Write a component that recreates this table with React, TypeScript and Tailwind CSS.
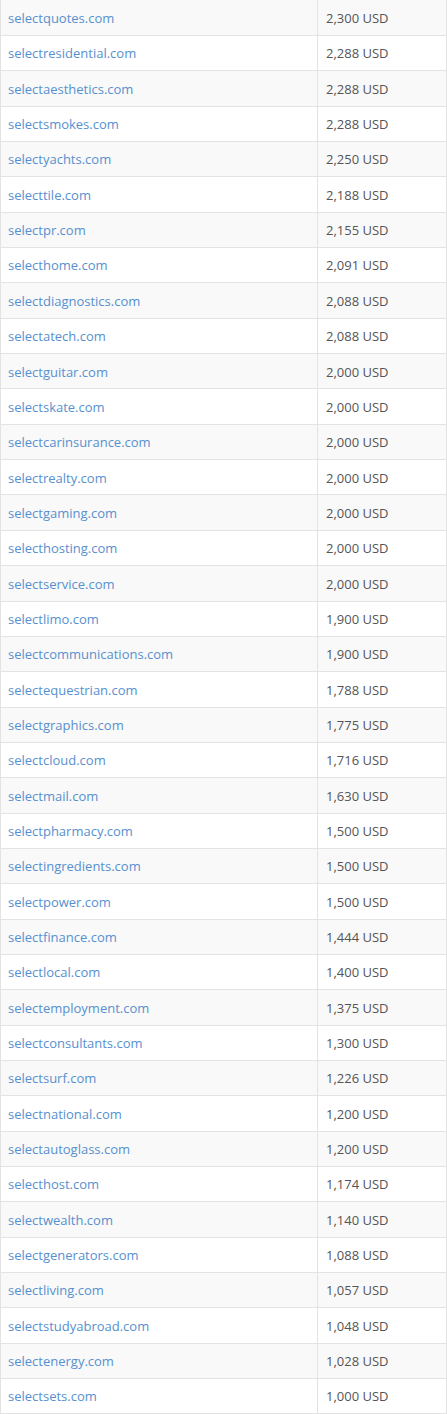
import React from 'react';

const domains: [string, string][] = [
  ['selectquotes.com', '2,300 USD'],
  ['selectresidential.com', '2,288 USD'],
  ['selectaesthetics.com', '2,288 USD'],
  ['selectsmokes.com', '2,288 USD'],
  ['selectyachts.com', '2,250 USD'],
  ['selecttile.com', '2,188 USD'],
  ['selectpr.com', '2,155 USD'],
  ['selecthome.com', '2,091 USD'],
  ['selectdiagnostics.com', '2,088 USD'],
  ['selectatech.com', '2,088 USD'],
  ['selectguitar.com', '2,000 USD'],
  ['selectskate.com', '2,000 USD'],
  ['selectcarinsurance.com', '2,000 USD'],
  ['selectrealty.com', '2,000 USD'],
  ['selectgaming.com', '2,000 USD'],
  ['selecthosting.com', '2,000 USD'],
  ['selectservice.com', '2,000 USD'],
  ['selectlimo.com', '1,900 USD'],
  ['selectcommunications.com', '1,900 USD'],
  ['selectequestrian.com', '1,788 USD'],
  ['selectgraphics.com', '1,775 USD'],
  ['selectcloud.com', '1,716 USD'],
  ['selectmail.com', '1,630 USD'],
  ['selectpharmacy.com', '1,500 USD'],
  ['selectingredients.com', '1,500 USD'],
  ['selectpower.com', '1,500 USD'],
  ['selectfinance.com', '1,444 USD'],
  ['selectlocal.com', '1,400 USD'],
  ['selectemployment.com', '1,375 USD'],
  ['selectconsultants.com', '1,300 USD'],
  ['selectsurf.com', '1,226 USD'],
  ['selectnational.com', '1,200 USD'],
  ['selectautoglass.com', '1,200 USD'],
  ['selecthost.com', '1,174 USD'],
  ['selectwealth.com', '1,140 USD'],
  ['selectgenerators.com', '1,088 USD'],
  ['selectliving.com', '1,057 USD'],
  ['selectstudyabroad.com', '1,048 USD'],
  ['selectenergy.com', '1,028 USD'],
  ['selectsets.com', '1,000 USD'],
];

export default function App() {
  return (
    <div className="w-[447px] bg-white font-['Open_Sans',sans-serif] text-[13px]">
      <div className="border-x border-[#e3e3e3]">
        {domains.map(([name, price], i) => (
          <div
            key={name}
            className={`flex h-[35.35px] border-b border-[#e3e3e3] ${i === 0 ? 'h-[36px]' : ''} ${i % 2 === 0 ? 'bg-[#f9f9f9]' : 'bg-white'}`}
          >
            <div className="w-[317px] flex items-center pl-[7px] pt-[2px] border-r border-[#e3e3e3]">
              <a href="#" className="text-[#5790cf] no-underline">{name}</a>
            </div>
            <div className="flex-1 flex items-center pl-[8px] pt-[2px] text-[#555]">{price}</div>
          </div>
        ))}
      </div>
    </div>
  );
}
